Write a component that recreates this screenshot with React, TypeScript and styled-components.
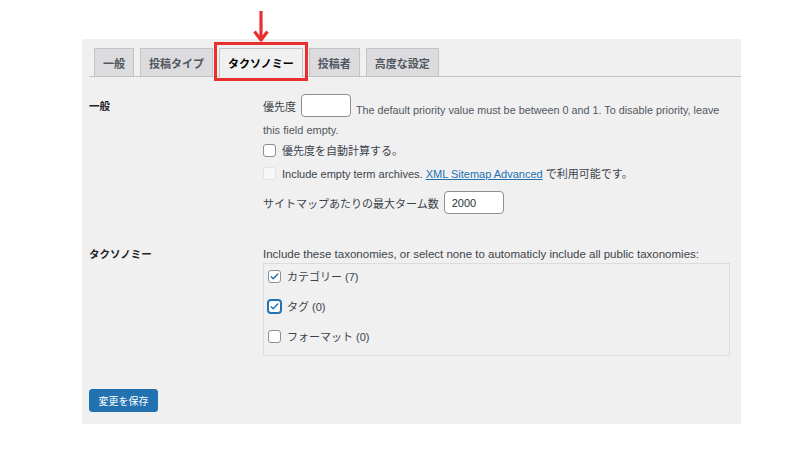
import React from "react";
import styled, { createGlobalStyle, css } from "styled-components";

const GlobalStyle = createGlobalStyle`
  html, body {
    margin: 0;
    padding: 0;
    background: #ffffff;
  }
  body {
    font-family: "Liberation Sans", "Noto Sans CJK JP", sans-serif;
    font-size: 11px;
    color: #3c434a;
  }
`;

const Page = styled.div`
  width: 812px;
  height: 457px;
  padding: 39px 0 0 82px;
  box-sizing: border-box;
`;

const Panel = styled.div`
  width: 659px;
  background: #f0f0f1;
  padding: 0 11px 11px 7px;
  box-sizing: border-box;
  box-shadow: 0 1px 1px rgba(0, 0, 0, 0.06);
`;

const TabBar = styled.nav`
  display: flex;
  gap: 6px;
  padding: 9px 0 0 5px;
  margin-right: -11px;
  border-bottom: 1px solid #c3c4c7;
`;

const Tab = styled.div<{ $active?: boolean }>`
  position: relative;
  height: 27px;
  padding: 0 8px;
  display: flex;
  align-items: center;
  font-family: "Noto Sans CJK JP", sans-serif;
  font-size: 11px;
  font-weight: 700;
  border: 1px solid #c3c4c7;
  border-bottom: none;
  margin-bottom: -1px;
  ${(p) =>
    p.$active
      ? css`
          background: #f0f0f1;
          color: #000000;
          height: 28px;
        `
      : css`
          background: #dcdcde;
          color: #50575e;
        `}
`;

const Highlight = styled.span`
  position: absolute;
  left: -6px;
  right: -6px;
  top: -7px;
  bottom: -4px;
  border: 3px solid #e8312f;
  pointer-events: none;
`;

const Arrow = styled.svg`
  position: absolute;
  left: 50%;
  top: -39px;
  transform: translateX(-50%);
`;

const Form = styled.div`
  padding-top: 17px;
`;

const Row = styled.div<{ $gap?: number }>`
  display: grid;
  grid-template-columns: 174px 1fr;
  margin-top: ${(p) => p.$gap ?? 0}px;
`;

const Label = styled.div<{ $lh: number }>`
  font-family: "Noto Sans CJK JP", sans-serif;
  font-size: 10.5px;
  font-weight: 700;
  color: #1d2327;
  line-height: ${(p) => p.$lh}px;
`;

const Field = styled.div`
  display: flex;
  flex-direction: column;
`;

const InlineLine = styled.div<{ $gap?: number }>`
  display: flex;
  align-items: center;
  gap: 5px;
  height: 23px;
  margin-top: ${(p) => p.$gap ?? 0}px;
  color: #3c434a;
  white-space: nowrap;
`;

const TextInput = styled.input<{ $w: number }>`
  width: ${(p) => p.$w}px;
  height: 23px;
  box-sizing: border-box;
  border: 1px solid #8c8f94;
  border-radius: 4px;
  background: #ffffff;
  padding: 0 7px;
  font-family: "Liberation Sans", sans-serif;
  font-size: 11px;
  color: #2c3338;
  outline: none;
`;

const Description = styled.span`
  color: #50575e;
  font-size: 10.8px;
  align-self: flex-end;
  margin-bottom: 1px;
`;

const TextLine = styled.div<{ $gap?: number; $muted?: boolean }>`
  line-height: 16px;
  margin-top: ${(p) => p.$gap ?? 0}px;
  color: ${(p) => (p.$muted ? "#50575e" : "#3c434a")};
  font-size: ${(p) => (p.$muted ? 11 : 11.5)}px;
  white-space: nowrap;
`;

const CheckRow = styled.label<{ $gap?: number }>`
  display: flex;
  align-items: center;
  gap: 6px;
  height: 16px;
  margin-top: ${(p) => p.$gap ?? 0}px;
  color: #3c434a;
  white-space: nowrap;
`;

const Box = styled.span<{ $disabled?: boolean; $focus?: boolean }>`
  width: 13px;
  height: 13px;
  box-sizing: border-box;
  border-radius: 3px;
  display: inline-flex;
  align-items: center;
  justify-content: center;
  flex: none;
  ${(p) =>
    p.$disabled
      ? css`
          border: 1px solid rgba(220, 220, 222, 0.75);
          background: rgba(255, 255, 255, 0.5);
        `
      : p.$focus
      ? css`
          border: 1px solid #2271b1;
          box-shadow: 0 0 0 1px #2271b1;
          background: #ffffff;
        `
      : css`
          border: 1px solid #8c8f94;
          background: #ffffff;
        `}
`;

const Link = styled.a`
  color: #2271b1;
  text-decoration: underline;
`;

const TaxBox = styled.div`
  margin-top: 1px;
  border: 1px solid #dcdcde;
  padding: 4px 8px 11px 4px;
  display: flex;
  flex-direction: column;
  gap: 14px;
`;

const SaveButton = styled.button`
  margin-top: 33px;
  width: 69px;
  height: 23px;
  border: 1px solid #2271b1;
  border-radius: 3px;
  background: #2271b1;
  color: #ffffff;
  font-family: "Noto Sans CJK JP", sans-serif;
  font-size: 10px;
  padding: 0;
`;

const Check = () => (
  <svg width="11" height="11" viewBox="0 0 20 20">
    <path d="M4 10.5l3.6 3.6L16 5.5" fill="none" stroke="#2271b1" strokeWidth="2.6" strokeLinecap="round" strokeLinejoin="round" />
  </svg>
);

const Checkbox: React.FC<{ checked?: boolean; disabled?: boolean; focus?: boolean }> = ({ checked, disabled, focus }) => (
  <Box $disabled={disabled} $focus={focus}>{checked && <Check />}</Box>
);

const tabs = ["一般", "投稿タイプ", "タクソノミー", "投稿者", "高度な設定"];

const taxonomies = [
  { name: "カテゴリー (7)", checked: true },
  { name: "タグ (0)", checked: true, focus: true },
  { name: "フォーマット (0)", checked: false },
];

export default function App() {
  return (
    <>
      <GlobalStyle />
      <Page>
        <Panel>
          <TabBar>
            {tabs.map((t) => (
              <Tab key={t} $active={t === "タクソノミー"}>
                {t}
                {t === "タクソノミー" && (
                  <>
                    <Highlight />
                    <Arrow width="18" height="33" viewBox="0 0 18 33">
                      <path d="M9 1v27" stroke="#e8312f" strokeWidth="3.2" />
                      <path d="M2.5 21.5l6.5 8.5 6.5-8.5" fill="none" stroke="#e8312f" strokeWidth="3.2" strokeLinejoin="round" />
                    </Arrow>
                  </>
                )}
              </Tab>
            ))}
          </TabBar>
          <Form>
            <Row>
              <Label $lh={23}>一般</Label>
              <Field>
                <InlineLine>
                  <span>優先度</span>
                  <TextInput $w={50} defaultValue="" />
                  <Description>The default priority value must be between 0 and 1. To disable priority, leave</Description>
                </InlineLine>
                <TextLine $gap={5} $muted>this field empty.</TextLine>
                <CheckRow $gap={4}>
                  <Checkbox />
                  <span>優先度を自動計算する。</span>
                </CheckRow>
                <CheckRow $gap={7}>
                  <Checkbox disabled />
                  <span>
                    Include empty term archives. <Link href="#">XML Sitemap Advanced</Link> で利用可能です。
                  </span>
                </CheckRow>
                <InlineLine $gap={10}>
                  <span>サイトマップあたりの最大ターム数</span>
                  <TextInput $w={60} defaultValue="2000" />
                </InlineLine>
              </Field>
            </Row>
            <Row $gap={32}>
              <Label $lh={16}>タクソノミー</Label>
              <Field>
                <TextLine>Include these taxonomies, or select none to automaticly include all public taxonomies:</TextLine>
                <TaxBox>
                  {taxonomies.map((t) => (
                    <CheckRow key={t.name}>
                      <Checkbox checked={t.checked} focus={t.focus} />
                      <span>{t.name}</span>
                    </CheckRow>
                  ))}
                </TaxBox>
              </Field>
            </Row>
            <SaveButton>変更を保存</SaveButton>
          </Form>
        </Panel>
      </Page>
    </>
  );
}
